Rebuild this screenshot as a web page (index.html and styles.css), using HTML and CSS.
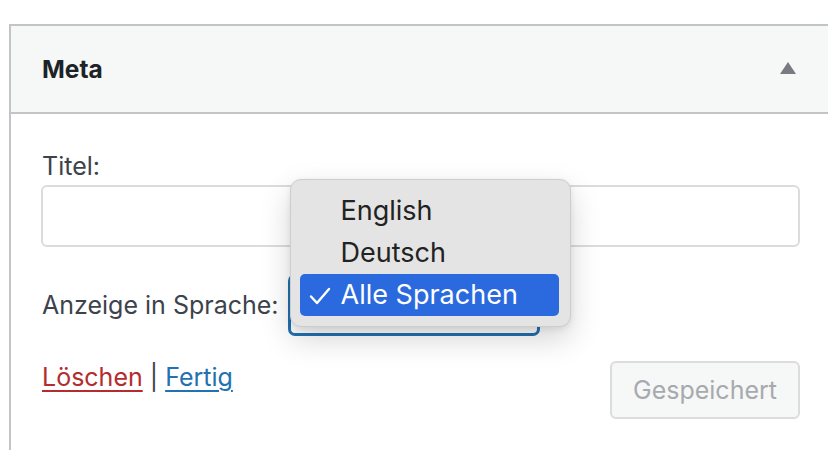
FILE: index.html
```html
<!DOCTYPE html>
<html lang="de">
<head>
<meta charset="utf-8">
<title>Meta</title>
<link rel="stylesheet" href="styles.css">
</head>
<body>
<div class="panel">
  <div class="panel-head">
    <h2 class="panel-title">Meta</h2>
    <span class="toggle" aria-hidden="true"></span>
  </div>
  <div class="panel-body">
    <label class="field-label" for="titel">Titel:</label>
    <input class="text-input" id="titel" type="text">
    <div class="lang-row">
      <label class="field-label inline" for="sprache">Anzeige in Sprache:</label>
      <div class="select-wrap">
        <div class="select-box" id="sprache"></div>
        <ul class="menu">
          <li class="menu-item">English</li>
          <li class="menu-item">Deutsch</li>
          <li class="menu-item selected"><svg class="check" width="22" height="18" viewBox="0 0 22 18" aria-hidden="true"><polyline points="2,9.5 8,16 20,2" fill="none" stroke="#fff" stroke-width="2.4" stroke-linecap="round" stroke-linejoin="round"/></svg>Alle Sprachen</li>
        </ul>
      </div>
    </div>
    <div class="actions">
      <div class="links">
        <a class="link-delete" href="#">Löschen</a><span class="sep"> | </span><a class="link-done" href="#">Fertig</a>
      </div>
      <button class="btn-saved" type="button" disabled>Gespeichert</button>
    </div>
  </div>
</div>
</body>
</html>
```
FILE: styles.css
```css
html, body {
  margin: 0;
  padding: 0;
  background: #fff;
  overflow: hidden;
}
body {
  width: 828px;
  height: 450px;
  font-family: Inter, "Liberation Sans", sans-serif;
  color: #3c434a;
}
.panel {
  margin: 24px 0 0 9px;
  border-left: 2px solid #c3c4c7;
  border-top: 2px solid #c3c4c7;
  height: 440px;
}
.panel-head {
  box-sizing: border-box;
  height: 88px;
  background: #f6f7f7;
  border-bottom: 2px solid #c3c4c7;
  display: flex;
  align-items: center;
  justify-content: space-between;
  padding: 0 32px 0 31px;
}
.panel-title {
  margin: 0;
  font-size: 24.5px;
  font-weight: 700;
  color: #1d2327;
}
.toggle {
  width: 0;
  height: 0;
  border-left: 8px solid transparent;
  border-right: 8px solid transparent;
  border-bottom: 12px solid #787c82;
  margin-top: -2px;
}
.panel-body {
  padding: 37px 28px 0 30px;
}
.field-label {
  display: block;
  font-size: 25px;
  line-height: 30px;
  padding-left: 1px;
  color: #3c434a;
}
.field-label.inline {
  display: inline-block;
}
.text-input {
  display: block;
  box-sizing: border-box;
  width: 100%;
  height: 62px;
  margin: 4px 0 0;
  border: 2px solid #dcdcde;
  border-radius: 6px;
  background: #fff;
}
.lang-row {
  display: flex;
  align-items: center;
  gap: 10px;
  margin-top: 28px;
}
.select-wrap {
  position: relative;
}
.select-box {
  box-sizing: border-box;
  width: 250px;
  height: 60px;
  border: 2px solid #2271b1;
  border-radius: 6px;
  background: #fff;
  box-shadow: 0 0 0 1px #2271b1;
}
.menu {
  position: absolute;
  left: 1px;
  top: -96px;
  width: 281px;
  box-sizing: border-box;
  margin: 0;
  padding: 10px 11px 10px 9px;
  list-style: none;
  background: #e4e4e4;
  border: 1px solid #cdcdcd;
  border-radius: 11px;
  box-shadow: 0 12px 30px rgba(0, 0, 0, 0.17), 0 2px 6px rgba(0, 0, 0, 0.08);
}
.menu-item {
  height: 42px;
  line-height: 42px;
  padding-left: 41px;
  font-size: 27px;
  color: #222;
  border-radius: 5px;
  position: relative;
}
.menu-item.selected {
  background: #2a6ade;
  color: #fff;
}
.check {
  position: absolute;
  left: 9px;
  top: 13px;
}
.actions {
  display: flex;
  justify-content: space-between;
  align-items: flex-start;
  margin-top: 26px;
}
.links {
  font-size: 25px;
  line-height: 30px;
  padding-left: 1px;
  margin-top: 1px;
}
.link-delete {
  color: #b32d2e;
  text-decoration: underline;
  text-decoration-thickness: 2px;
  text-underline-offset: 4px;
}
.link-done {
  color: #2271b1;
  text-decoration: underline;
  text-decoration-thickness: 2px;
  text-underline-offset: 4px;
}
.sep {
  color: #3c434a;
}
.btn-saved {
  box-sizing: border-box;
  width: 190px;
  height: 58px;
  padding: 0;
  border: 2px solid #dcdcde;
  border-radius: 6px;
  background: #f6f7f7;
  color: #a7aaad;
  font-family: Inter, "Liberation Sans", sans-serif;
  font-size: 25px;
}
```
